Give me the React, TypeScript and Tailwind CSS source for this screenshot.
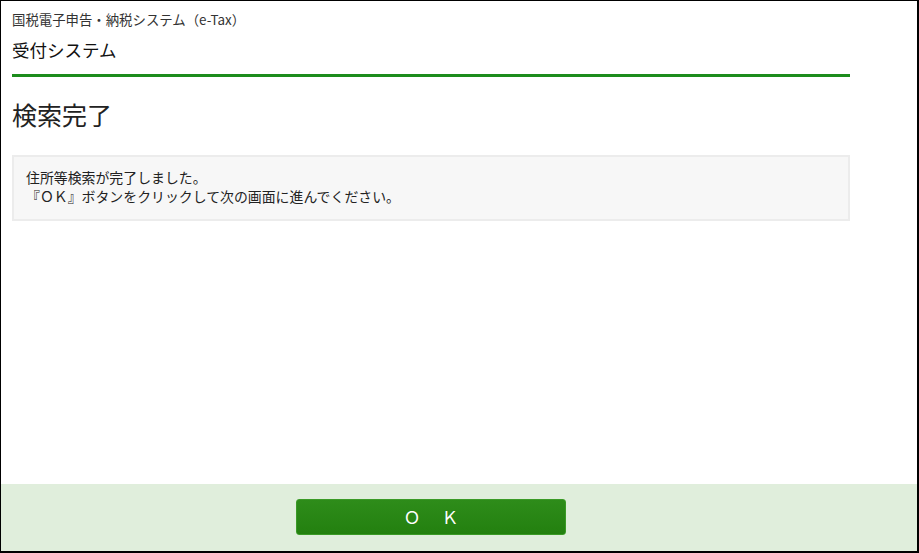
import React from "react";

export default function App() {
  return (
    <div
      className="w-[919px] h-[553px] bg-white border-black border-l border-t border-r-2 border-b-2 flex flex-col text-[#222]"
      style={{ fontFamily: '"Noto Sans CJK JP", "Liberation Sans", sans-serif' }}
    >
      <div className="flex-1 px-[11px] pr-[67px]">
        <div className="pt-[9px] text-[13.4px] leading-[18px] text-[#333]">国税電子申告・納税システム（e-Tax）</div>
        <div className="mt-[11px] text-[17.5px] leading-[22px] font-normal text-[#111]">受付システム</div>
        <div className="mt-[13px] h-[3px] bg-[#1c8c1c]" />
        <h1 className="mt-[21px] text-[25px] leading-[32px] text-[#222]">検索完了</h1>
        <div className="mt-[25px] bg-[#f7f7f7] border-2 border-[#ececec] px-[12px] py-[11px] text-[13.9px] leading-[19px] text-[#222] h-[66px]">
          <div>住所等検索が完了しました。</div>
          <div>『ＯＫ』ボタンをクリックして次の画面に進んでください。</div>
        </div>
      </div>
      <div className="h-[67px] bg-[#e0eedc] flex pt-[15px] pl-[295px]">
        <button className="w-[270px] h-[36px] rounded-[3px] bg-gradient-to-b from-[#2e8c1a] to-[#23800f] border border-[#3a9a26] text-white text-[17px] tracking-[21px] pl-[21px]">
          ＯＫ
        </button>
      </div>
    </div>
  );
}
